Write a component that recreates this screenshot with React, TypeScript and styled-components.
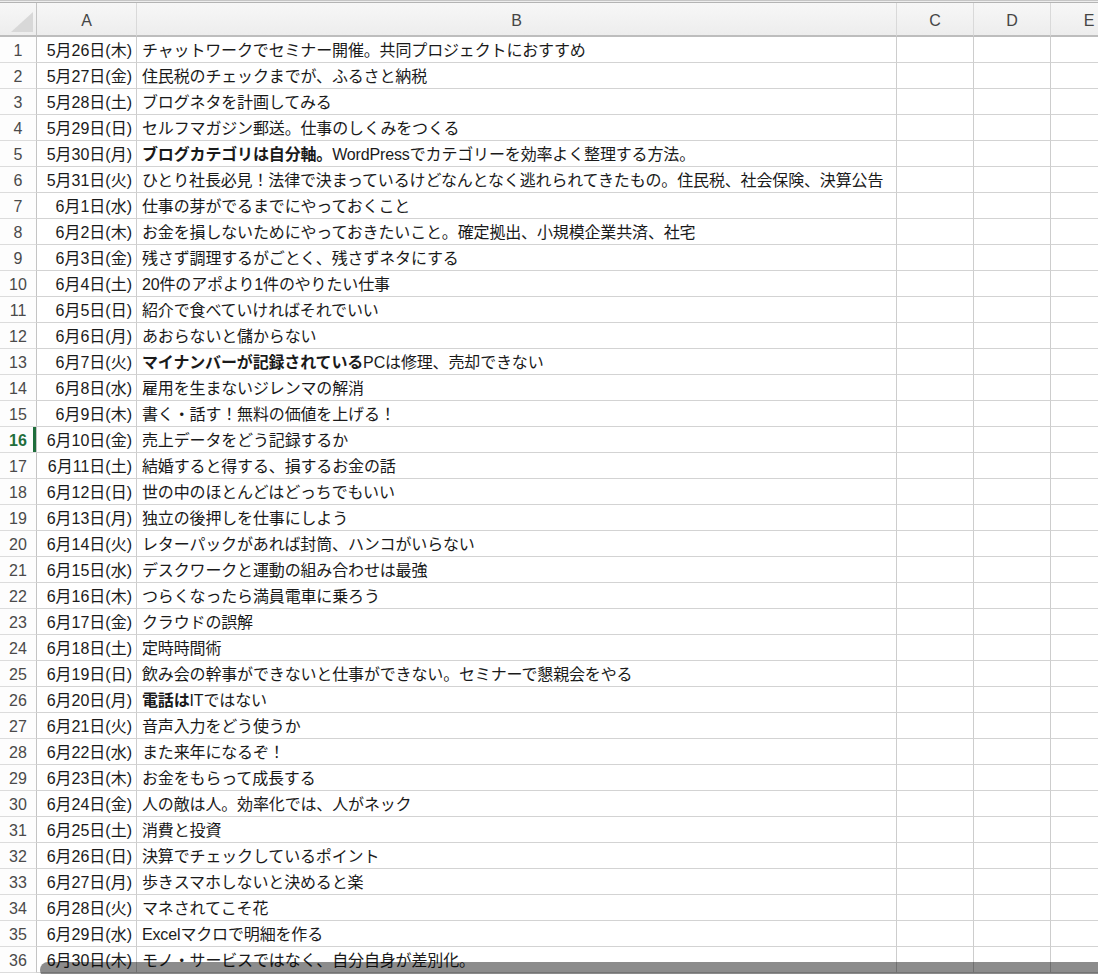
import React from "react";
import styled, { createGlobalStyle } from "styled-components";

const GlobalStyle = createGlobalStyle`
  html, body {
    margin: 0;
    padding: 0;
    background: #ffffff;
    overflow: hidden;
  }
  body {
    font-family: "Liberation Sans", "Noto Sans CJK JP", sans-serif;
  }
`;

type Entry = { date: string; bold?: string; rest: string };

const entries: Entry[] = [
  { date: "5月26日(木)", rest: "チャットワークでセミナー開催。共同プロジェクトにおすすめ" },
  { date: "5月27日(金)", rest: "住民税のチェックまでが、ふるさと納税" },
  { date: "5月28日(土)", rest: "ブログネタを計画してみる" },
  { date: "5月29日(日)", rest: "セルフマガジン郵送。仕事のしくみをつくる" },
  { date: "5月30日(月)", bold: "ブログカテゴリは自分軸。", rest: "WordPressでカテゴリーを効率よく整理する方法。" },
  { date: "5月31日(火)", rest: "ひとり社長必見！法律で決まっているけどなんとなく逃れられてきたもの。住民税、社会保険、決算公告" },
  { date: "6月1日(水)", rest: "仕事の芽がでるまでにやっておくこと" },
  { date: "6月2日(木)", rest: "お金を損しないためにやっておきたいこと。確定拠出、小規模企業共済、社宅" },
  { date: "6月3日(金)", rest: "残さず調理するがごとく、残さずネタにする" },
  { date: "6月4日(土)", rest: "20件のアポより1件のやりたい仕事" },
  { date: "6月5日(日)", rest: "紹介で食べていければそれでいい" },
  { date: "6月6日(月)", rest: "あおらないと儲からない" },
  { date: "6月7日(火)", bold: "マイナンバーが記録されている", rest: "PCは修理、売却できない" },
  { date: "6月8日(水)", rest: "雇用を生まないジレンマの解消" },
  { date: "6月9日(木)", rest: "書く・話す！無料の価値を上げる！" },
  { date: "6月10日(金)", rest: "売上データをどう記録するか" },
  { date: "6月11日(土)", rest: "結婚すると得する、損するお金の話" },
  { date: "6月12日(日)", rest: "世の中のほとんどはどっちでもいい" },
  { date: "6月13日(月)", rest: "独立の後押しを仕事にしよう" },
  { date: "6月14日(火)", rest: "レターパックがあれば封筒、ハンコがいらない" },
  { date: "6月15日(水)", rest: "デスクワークと運動の組み合わせは最強" },
  { date: "6月16日(木)", rest: "つらくなったら満員電車に乗ろう" },
  { date: "6月17日(金)", rest: "クラウドの誤解" },
  { date: "6月18日(土)", rest: "定時時間術" },
  { date: "6月19日(日)", rest: "飲み会の幹事ができないと仕事ができない。セミナーで懇親会をやる" },
  { date: "6月20日(月)", bold: "電話は", rest: "ITではない" },
  { date: "6月21日(火)", rest: "音声入力をどう使うか" },
  { date: "6月22日(水)", rest: "また来年になるぞ！" },
  { date: "6月23日(木)", rest: "お金をもらって成長する" },
  { date: "6月24日(金)", rest: "人の敵は人。効率化では、人がネック" },
  { date: "6月25日(土)", rest: "消費と投資" },
  { date: "6月26日(日)", rest: "決算でチェックしているポイント" },
  { date: "6月27日(月)", rest: "歩きスマホしないと決めると楽" },
  { date: "6月28日(火)", rest: "マネされてこそ花" },
  { date: "6月29日(水)", rest: "Excelマクロで明細を作る" },
  { date: "6月30日(木)", rest: "モノ・サービスではなく、自分自身が差別化。" },
];

const ACTIVE_ROW = 16;
const columns = ["A", "B", "C", "D", "E"];

const Window = styled.div`
  position: relative;
  width: 1098px;
  height: 974px;
  overflow: hidden;
  background: #ffffff;
`;

const FormulaEdge = styled.div`
  height: 3px;
  box-sizing: border-box;
  background: #eeeeee;
  border-top: 1px solid #c6c6c6;
  border-bottom: 1px solid #b4b4b4;
`;

const Sheet = styled.div`
  display: grid;
  grid-template-columns: 37px 100px 760px 77px 77px 77px;
  grid-template-rows: 34px;
  grid-auto-rows: 26px;
  width: 1128px;
  font-size: 16px;
  color: #1a1a1a;
`;

const Cell = styled.div`
  box-sizing: border-box;
  border-right: 1px solid #cdcdcd;
  border-bottom: 1px solid #d3d3d3;
  display: flex;
  align-items: center;
  white-space: nowrap;
  overflow: hidden;
  line-height: 1;
  padding-top: 2px;
`;

const CornerCell = styled(Cell)`
  background: linear-gradient(#f7f7f7, #ededed);
  border-bottom: 2px solid #bdbdbd;
  border-right-color: #c4c4c4;
  justify-content: flex-end;
  align-items: flex-end;
  padding: 0 3px 3px 0;
`;

const ColHeader = styled(Cell)`
  background: linear-gradient(#f7f7f7, #ededed);
  border-bottom: 2px solid #bdbdbd;
  border-right-color: #d9d9d9;
  justify-content: center;
  color: #454545;
  font-size: 16px;
  padding-top: 3px;
`;

const RowHeader = styled(Cell)<{ $active: boolean }>`
  position: relative;
  justify-content: center;
  background: #fdfdfd;
  border-right-color: #c4c4c4;
  border-bottom-color: #dcdcdc;
  color: ${(p) => (p.$active ? "#1f6e3c" : "#4a4a4a")};
  font-weight: ${(p) => (p.$active ? 700 : 400)};
  font-size: 16px;

  &::after {
    content: "";
    display: ${(p) => (p.$active ? "block" : "none")};
    position: absolute;
    top: -1px;
    right: 0;
    bottom: 0;
    width: 3px;
    background: #1f6e3c;
  }
`;

const DateCell = styled(Cell)`
  justify-content: flex-end;
  padding-right: 4px;
`;

const TitleCell = styled(Cell)`
  padding-left: 5px;
  letter-spacing: -0.15px;
`;

const Strong = styled.b`
  font-weight: 700;
`;

const ScrollThumb = styled.div`
  position: absolute;
  left: 40px;
  right: -12px;
  top: 962px;
  height: 16px;
  border-radius: 8px;
  background: rgba(0, 0, 0, 0.45);
`;

const CornerMark = () => (
  <svg width="22" height="20" viewBox="0 0 22 20">
    <polygon points="0,20 22,0 22,20" fill="#d8d8d8" />
  </svg>
);

export default function App() {
  return (
    <Window>
      <GlobalStyle />
      <FormulaEdge />
      <Sheet>
        <CornerCell>
          <CornerMark />
        </CornerCell>
        {columns.map((c) => (
          <ColHeader key={c}>{c}</ColHeader>
        ))}
        {entries.map((e, i) => {
          const n = i + 1;
          return (
            <React.Fragment key={n}>
              <RowHeader $active={n === ACTIVE_ROW}>{n}</RowHeader>
              <DateCell>{e.date}</DateCell>
              <TitleCell>
                {e.bold && <Strong>{e.bold}</Strong>}
                {e.rest}
              </TitleCell>
              <Cell />
              <Cell />
              <Cell />
            </React.Fragment>
          );
        })}
      </Sheet>
      <ScrollThumb />
    </Window>
  );
}
